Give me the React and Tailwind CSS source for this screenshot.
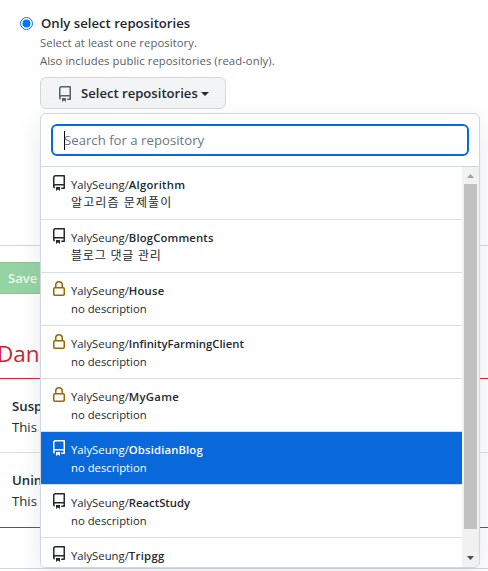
import React from "react";

const REPO =
  "M2 2.5A2.5 2.5 0 014.5 0h8.75a.75.75 0 01.75.75v12.5a.75.75 0 01-.75.75h-2.5a.75.75 0 110-1.5h1.75v-2h-8a1 1 0 00-.714 1.7.75.75 0 01-1.072 1.05A2.495 2.495 0 012 11.5v-9zm10.5-1V9h-8c-.356 0-.694.074-1 .208V2.5a1 1 0 011-1h8zM5 12.25v3.25a.25.25 0 00.4.2l1.45-1.087a.25.25 0 01.3 0L8.6 15.7a.25.25 0 00.4-.2v-3.25a.25.25 0 00-.25-.25h-3.5a.25.25 0 00-.25.25z";
const LOCK =
  "M4 4v2h-.25A1.75 1.75 0 002 7.75v5.5c0 .966.784 1.75 1.75 1.75h8.5A1.75 1.75 0 0014 13.25v-5.5A1.75 1.75 0 0012.25 6H12V4a4 4 0 10-8 0zm6.5 2V4a2.5 2.5 0 10-5 0v2h5zM12 7.5h.25a.25.25 0 01.25.25v5.5a.25.25 0 01-.25.25h-8.5a.25.25 0 01-.25-.25v-5.5a.25.25 0 01.25-.25H12z";

function Icon({ d, className }) {
  return (
    <svg viewBox="0 0 16 16" fill="currentColor" fillRule="evenodd" className={"size-4 shrink-0 " + className}>
      <path d={d} />
    </svg>
  );
}

const repos = [
  { name: "Algorithm", desc: "알고리즘 문제풀이", tracking: "tracking-[0.25px]", descTracking: "tracking-[1.1px]" },
  { name: "BlogComments", desc: "블로그 댓글 관리", tracking: "tracking-[0.15px]", descTracking: "tracking-[0.8px]" },
  { name: "House", locked: true, tracking: "tracking-[0.2px]" },
  { name: "InfinityFarmingClient", locked: true, tracking: "tracking-normal" },
  { name: "MyGame", locked: true, tracking: "tracking-[0.3px]" },
  { name: "ObsidianBlog", selected: true, tracking: "tracking-[0.15px]" },
  { name: "ReactStudy", tracking: "tracking-normal" },
  { name: "Tripgg", tracking: "tracking-[0.3px]" },
];

function RepoRow({ repo }) {
  const tone = repo.selected ? "bg-[#0969da] text-white" : "bg-white text-[#24292f]";
  const iconTone = repo.selected ? "text-white" : repo.locked ? "text-[#9a6700]" : "text-[#24292f]";
  return (
    <li className={"flex h-[53px] shrink-0 border-b border-[#d8dee4] py-2 pl-2.5 " + tone}>
      <Icon d={repo.locked ? LOCK : REPO} className={iconTone} />
      <div className="ml-1 whitespace-nowrap text-[11.3px] leading-[18px]">
        <p className="h-[18px] pt-px">
          YalySeung/<span className={"font-semibold " + repo.tracking}>{repo.name}</span>
        </p>
        <p className={repo.desc ? "h-[18px] pt-px text-[12px] " + repo.descTracking : "h-[18px] pt-px"}>
          {repo.desc || "no description"}
        </p>
      </div>
    </li>
  );
}

function RepoMenu() {
  return (
    <div className="absolute left-10 top-[113px] flex h-[455px] w-[440px] flex-col overflow-hidden rounded-md border border-[#d0d7de] bg-white shadow-[0_8px_24px_rgba(140,149,159,0.2)]">
      <div className="h-[53px] shrink-0 border-b border-[#d0d7de] pl-2.5 pt-2.5">
        <div className="flex h-8 w-[418px] items-center rounded-md border-2 border-[#0969da] pl-[11px] text-[13.2px] text-[#6e7781]">
          <span className="h-[19px] w-px bg-black" />
          <span className="-ml-px pt-px">Search for a repository</span>
        </div>
      </div>
      <div className="flex min-h-0 flex-1">
        <ul className="flex flex-1 flex-col overflow-hidden">
          {repos.map((r) => (
            <RepoRow key={r.name} repo={r} />
          ))}
        </ul>
        <div className="flex w-[17px] flex-col items-center bg-[#f1f1f1]">
          <svg viewBox="0 0 17 17" className="h-[17px] w-[17px]">
            <path d="M5 11h7L8.5 7z" fill="#a3a3a3" />
          </svg>
          <div className="h-[345px] w-[13px] bg-[#c1c1c1]" />
          <svg viewBox="0 0 17 17" className="mt-auto h-[17px] w-[17px]">
            <path d="M5 6h7l-3.5 4z" fill="#505050" />
          </svg>
        </div>
      </div>
    </div>
  );
}

export default function App() {
  return (
    <div className="relative h-[571px] w-[488px] overflow-hidden bg-white font-['Open_Sans','Noto_Sans_CJK_KR',sans-serif] text-[#24292f]">
      <section className="h-[246px] border-b border-[#d0d7de] pl-5 pt-3">
        <div className="flex h-[22px] items-center">
          <svg viewBox="0 0 13 13" className="size-[13px]">
            <circle cx="6.5" cy="6.5" r="6" fill="white" stroke="#0075ff" />
            <circle cx="6.5" cy="6.5" r="4" fill="#0075ff" />
          </svg>
          <span className="ml-2 text-[13.15px] font-semibold leading-[21px]">Only select repositories</span>
        </div>
        <div className="ml-5 text-[11.3px] leading-[18px] tracking-[0.06px] text-[#57606a]">
          <p>Select at least one repository.</p>
          <p>Also includes public repositories (read-only).</p>
        </div>
        <button className="ml-5 mt-[7px] flex h-8 w-[186px] items-center rounded-md border border-[#d5d8da] bg-[#f3f4f6] pl-4 text-[13.1px] font-semibold">
          <Icon d={REPO} className="mt-px text-[#57606a]" />
          <span className="ml-2 pt-px">Select repositories</span>
          <span className="ml-[3px] mt-0.5 border-x-4 border-t-4 border-x-transparent border-t-[#24292f]" />
        </button>
      </section>

      <button className="mt-4 flex h-8 w-20 items-center border-y border-[#89c397] bg-[#94d3a2] pl-2 pt-px text-[13.1px] font-semibold text-white/80">
        Save
      </button>
      <h2 className="-ml-[3px] mt-[42px] h-[42px] text-[22.5px] leading-9 text-[#cf222e]">Danger zone</h2>

      <section className="h-[150px] border-y border-[#cf222e] text-[13.2px] leading-[21px]">
        <div className="h-[74px] border-b border-[#d8dee4] pl-3 pt-[17px]">
          <p className="font-semibold">Suspend your installation</p>
          <p>This will block the app access to your resources.</p>
        </div>
        <div className="pl-3 pt-[17px]">
          <p className="font-semibold">Uninstall</p>
          <p>This will remove the app.</p>
        </div>
      </section>
      <div className="mt-10 h-px bg-[#d0d7de]" />

      <RepoMenu />
    </div>
  );
}
